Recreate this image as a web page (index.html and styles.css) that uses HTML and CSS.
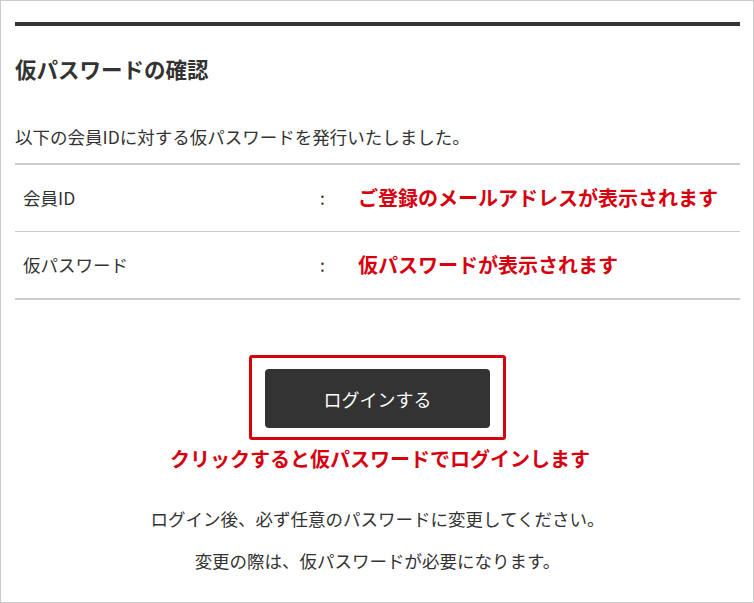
FILE: index.html
```html
<!DOCTYPE html>
<html lang="ja">
<head>
<meta charset="utf-8">
<title>仮パスワードの確認</title>
<link rel="stylesheet" href="styles.css">
</head>
<body>
<div class="page">
  <div class="topbar"></div>
  <h1 class="title">仮パスワードの確認</h1>
  <p class="intro">以下の会員IDに対する仮パスワードを発行いたしました。</p>
  <div class="table">
    <div class="row">
      <div class="label">会員ID</div>
      <div class="colon">:</div>
      <div class="value">ご登録のメールアドレスが表示されます</div>
    </div>
    <div class="row last">
      <div class="label">仮パスワード</div>
      <div class="colon">:</div>
      <div class="value">仮パスワードが表示されます</div>
    </div>
  </div>
  <div class="action">
    <div class="frame">
      <button class="btn" type="button">ログインする</button>
    </div>
    <p class="note">クリックすると仮パスワードでログインします</p>
  </div>
  <p class="msg msg1">ログイン後、必ず任意のパスワードに変更してください。</p>
  <p class="msg msg2">変更の際は、仮パスワードが必要になります。</p>
</div>
</body>
</html>
```
FILE: styles.css
```css
* { box-sizing: border-box; }
html, body { margin: 0; padding: 0; background: #fff; }
body {
  font-family: "Noto Sans CJK JP", "Noto Sans", sans-serif;
  color: #333;
}
.page {
  width: 754px;
  height: 603px;
  border: 1px solid #ccc;
  padding: 0 13px 0 14px;
  overflow: hidden;
}
.topbar {
  margin-top: 21px;
  height: 4px;
  background: #333;
}
.title {
  margin: 28px 0 0;
  font-size: 21.5px;
  line-height: 30px;
  font-weight: 700;
  color: #333;
}
.intro {
  margin: 40px 0 13px;
  font-size: 17.5px;
  line-height: 26px;
}
.table {
  border-top: 2px solid #ccc;
  border-bottom: 2px solid #ccc;
}
.row {
  display: grid;
  grid-template-columns: 305px 38px 1fr;
  align-items: center;
  height: 67px;
  border-bottom: 1px solid #ccc;
}
.row.last { border-bottom: 0; height: 66px; }
.label {
  padding-left: 8px;
  font-size: 17.5px;
  line-height: 26px;
}
.colon {
  font-size: 17.5px;
  line-height: 26px;
}
.value {
  color: #d7000f;
  font-weight: 700;
  font-size: 20px;
  line-height: 28px;
}
.action {
  display: flex;
  flex-direction: column;
  align-items: center;
  margin-top: 55px;
}
.frame {
  border: 3px solid #d7000f;
  border-radius: 3px;
  padding: 11px 13px 9px;
}
.btn {
  display: block;
  width: 225px;
  height: 59px;
  background: #333;
  color: #fff;
  border: 0;
  border-radius: 4px;
  font-family: "Noto Sans CJK JP", "Noto Sans", sans-serif;
  font-size: 18px;
  line-height: 26px;
  padding: 0;
}
.note {
  margin: 5px 0 0 5px;
  color: #d7000f;
  font-weight: 700;
  font-size: 20px;
  line-height: 28px;
}
.msg {
  margin: 0;
  text-align: center;
  font-size: 17.5px;
  line-height: 26px;
}
.msg1 { margin-top: 33px; }
.msg2 { margin-top: 16px; }
```
